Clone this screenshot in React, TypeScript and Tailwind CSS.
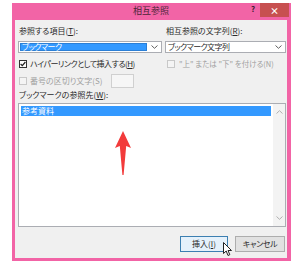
function Chevron({ up = false, color = '#606060' }: { up?: boolean; color?: string }) {
  return (
    <svg width="7" height="4" viewBox="0 0 7 4" className={up ? 'rotate-180' : ''}>
      <path d="M0.5 0.5 L3.5 3.3 L6.5 0.5" fill="none" stroke={color} strokeWidth="1" />
    </svg>
  );
}

function Check({ checked = false, disabled = false }: { checked?: boolean; disabled?: boolean }) {
  return (
    <div
      className={
        'flex h-[8px] w-[8px] shrink-0 items-center justify-center border ' +
        (disabled ? 'border-[#c8c8c8] bg-[#f4f4f4]' : 'border-[#333333] bg-white')
      }
    >
      {checked && (
        <svg width="6" height="6" viewBox="0 0 6 6">
          <path d="M0.6 3 L2.3 4.7 L5.4 1" fill="none" stroke="#222" strokeWidth="1.2" />
        </svg>
      )}
    </div>
  );
}

function Key({ k }: { k: string }) {
  return <span className="underline underline-offset-1">{k}</span>;
}

function Cursor() {
  return (
    <svg width="10" height="15" viewBox="0 0 10 15" className="absolute left-[42px] top-[5px]">
      <path d="M0.5 0.5 L0.5 11.5 L3.2 9 L5 13.5 L6.8 12.7 L5 8.5 L8.5 8.5 Z" fill="#fff" stroke="#222" strokeWidth="1" />
    </svg>
  );
}

export default function App() {
  return (
    <div className="min-h-[267px] w-[298px] bg-white pl-[12px] pt-[3px] font-['Noto_Sans_CJK_JP','Noto_Sans',sans-serif] [font-feature-settings:'palt']">
      <div className="flex h-[258px] w-[279px] flex-col bg-[#f264a6] pb-[3px] pl-[3px] pr-[4px]">
        <div className="grid h-[17px] grid-cols-[1fr_auto_1fr] items-start">
          <div />
          <div className="pt-[2px] text-[9px] leading-[12px] text-[#4a2438]">相互参照</div>
          <div className="flex justify-end">
            <span className="mr-[3px] w-[8px] pt-[1px] text-center text-[8px] font-bold leading-[10px] text-[#3a2030]">?</span>
            <div className="-mr-[2px] flex h-[14px] w-[29px] items-center justify-center bg-[#c75050] text-[9px] font-bold leading-none text-white">
              ×
            </div>
          </div>
        </div>

        <div className="flex flex-1 flex-col bg-[#f0f0f0] pb-[6px] pl-[3px] pr-[1px] pt-[6px] text-[8px] leading-[10px] text-[#2a2a2a]">
          <div className="grid grid-cols-[144px_121px] gap-x-[3px]">
            <div className="h-[10px] pl-[1px]">
              参照する項目(<Key k="T" />):
            </div>
            <div className="h-[10px] pl-[1px]">
              相互参照の文字列(<Key k="R" />):
            </div>

            <div className="mt-[5px] flex h-[12px] border border-[#abadb3] bg-white">
              <div className="m-[1px] flex flex-1 items-center border border-[#2b7fd6] bg-[#3399ff] pl-[1px] tracking-[-0.5px] text-white">
                ブックマーク
              </div>
              <div className="flex w-[13px] items-center justify-center">
                <Chevron />
              </div>
            </div>
            <div className="mt-[5px] flex h-[12px] border border-[#abadb3] bg-white">
              <div className="flex flex-1 items-center pl-[2px] tracking-[-0.6px]">ブックマーク文字列</div>
              <div className="flex w-[13px] items-center justify-center">
                <Chevron />
              </div>
            </div>

            <div className="mt-[6px] flex h-[10px] items-center gap-[3px] pl-[1px]">
              <Check checked />
              <span className="tracking-[-0.5px]">
                ハイパーリンクとして挿入する(<Key k="H" />)
              </span>
            </div>
            <div className="mt-[6px] flex h-[10px] items-center gap-[4px] pl-[2px] text-[7.5px] text-[#a0a0a0]">
              <Check disabled />
              <span>"上" または "下" を付ける(N)</span>
            </div>

            <div className="mt-[5px] flex h-[14px] items-center pl-[1px] text-[#a0a0a0]">
              <Check disabled />
              <span className="ml-[3px]">番号の区切り文字(S)</span>
              <div className="ml-[8px] h-[14px] w-[23px] border border-[#d0d0d0] bg-[#f6f6f6]" />
            </div>
            <div />
          </div>

          <div className="mt-[2px] h-[10px] pl-[1px]">
            ブックマークの参照先(<Key k="W" />):
          </div>

          <div className="relative mt-[3px] flex h-[124px] border border-[#abadb3] bg-white">
            <div className="flex-1 p-[2px]">
              <div className="flex h-[10px] items-center bg-[#3399ff] pl-[1px] text-white">参考資料</div>
            </div>
            <div className="flex w-[12px] flex-col items-center justify-between bg-[#f3f3f3] py-[6px]">
              <Chevron up color="#b0b0b0" />
              <Chevron color="#b0b0b0" />
            </div>
            <svg width="16" height="45" viewBox="0 0 16 45" className="absolute left-[96px] top-[27px]">
              <polygon points="8,0 16,17 11.2,15 8.6,44 7.4,44 4.8,15 0,17" fill="#f23b3b" />
            </svg>
          </div>

          <div className="mt-[9px] flex justify-end gap-[7px] pr-[1px]">
            <div className="relative flex h-[16px] w-[48px] items-center justify-center border border-[#3c7fb1] bg-[#e5f1fb]">
              挿入(<Key k="I" />)
              <Cursor />
            </div>
            <div className="flex h-[16px] w-[50px] items-center justify-center border border-[#adadad] bg-[#e1e1e1] tracking-[-0.4px]">
              キャンセル
            </div>
          </div>
        </div>
      </div>
    </div>
  );
}
